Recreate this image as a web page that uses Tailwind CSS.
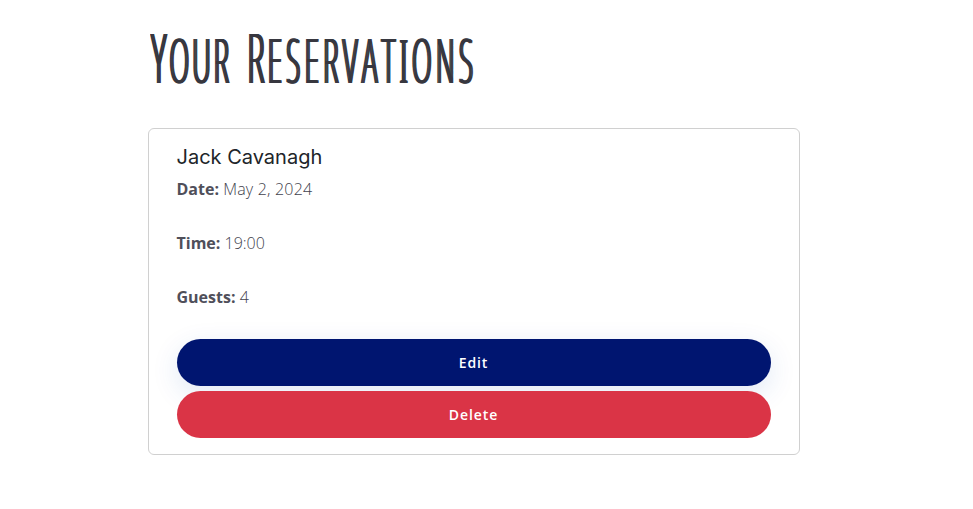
<!DOCTYPE html>
<html lang="en"><head><meta charset="utf-8"><title>Your Reservations</title>
<script src="https://cdn.jsdelivr.net/npm/@tailwindcss/browser@4"></script></head>
<body class="bg-white font-['Open_Sans',sans-serif] text-[#4f4f5a] overflow-hidden">
<main class="ml-[148px] w-[652px] pt-[23px]">
<h1 class="h-[105px] pl-[2px] whitespace-nowrap text-[#37373f]"><span class="inline-block origin-left scale-x-[0.42] text-[68px] leading-[68px] font-light tracking-[7.5px] [text-shadow:2px_0_currentColor,4px_0_currentColor,6px_0_currentColor]"><span>Y</span><span class="text-[61px]">OUR</span><span class="tracking-[19px]"> </span><span>R</span><span class="text-[61px] tracking-[10.5px]">ESERVAT<span class="font-['Noto_Sans',sans-serif]">I</span>ONS</span></span></h1>
<section class="h-[327px] rounded-[6px] border border-[#d0d0d0] px-7 pt-4">
<h2 class="-ml-[0.5px] font-['Inter',sans-serif] text-[20px] leading-6 text-[#212529]">Jack Cavanagh</h2>
<div class="-ml-[0.5px] mt-2 flex flex-col gap-[30px] text-[16px] leading-6 font-light text-[#42424d]">
<p><strong class="font-bold text-[#4f4f5a]">Date:</strong> <span class="tracking-[0.2px]">May 2, 2024</span></p>
<p><strong class="font-bold text-[#4f4f5a]">Time:</strong> 19:00</p>
<p><strong class="font-bold text-[#4f4f5a]">Guests:</strong> 4</p>
</div>
<div class="mt-[30px] flex flex-col gap-[5px] text-[14px] font-semibold tracking-[0.9px] text-white">
<button class="h-[47px] rounded-full bg-[#001570] pr-[1px] shadow-[0_8px_28px_rgba(20,70,170,0.12)]">Edit</button>
<button class="relative h-[47px] rounded-full bg-[#da3446] pr-[1px]">Delete</button>
</div>
</section>
</main></body></html>
